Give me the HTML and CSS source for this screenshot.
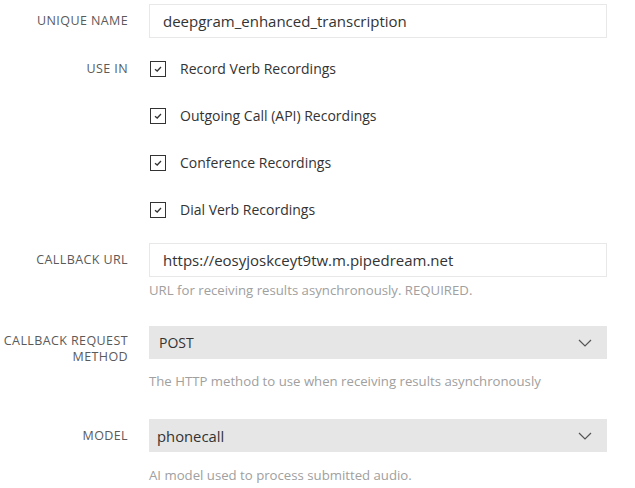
FILE: index.html
```html
<!DOCTYPE html>
<html>
<head>
<meta charset="utf-8">
<link rel="stylesheet" href="styles.css">
</head>
<body>
<form class="form">
  <div class="row row-name">
    <label class="label">UNIQUE NAME</label>
    <div class="field">
      <div class="input">deepgram_enhanced_transcription</div>
    </div>
  </div>
  <div class="row row-use">
    <label class="label label-use">USE IN</label>
    <div class="field checks">
      <div class="check"><span class="box"><svg width="10" height="8" viewBox="0 0 10 8"><path d="M2 4.2 L4.2 6 L8 2" fill="none" stroke="#333" stroke-width="1.3"/></svg></span><span>Record Verb Recordings</span></div>
      <div class="check"><span class="box"><svg width="10" height="8" viewBox="0 0 10 8"><path d="M2 4.2 L4.2 6 L8 2" fill="none" stroke="#333" stroke-width="1.3"/></svg></span><span>Outgoing Call (API) Recordings</span></div>
      <div class="check"><span class="box"><svg width="10" height="8" viewBox="0 0 10 8"><path d="M2 4.2 L4.2 6 L8 2" fill="none" stroke="#333" stroke-width="1.3"/></svg></span><span>Conference Recordings</span></div>
      <div class="check"><span class="box"><svg width="10" height="8" viewBox="0 0 10 8"><path d="M2 4.2 L4.2 6 L8 2" fill="none" stroke="#333" stroke-width="1.3"/></svg></span><span>Dial Verb Recordings</span></div>
    </div>
  </div>
  <div class="row row-url">
    <label class="label">CALLBACK URL</label>
    <div class="field">
      <div class="input">https://eosyjoskceyt9tw.m.pipedream.net</div>
      <div class="help help-url">URL for receiving results asynchronously. REQUIRED.</div>
    </div>
  </div>
  <div class="row row-method">
    <label class="label label-two">CALLBACK REQUEST<br>METHOD</label>
    <div class="field">
      <div class="select"><span>POST</span><svg class="chev" width="14" height="8" viewBox="0 0 14 8"><path d="M1 1 L7 7 L13 1" fill="none" stroke="#555" stroke-width="1.2"/></svg></div>
      <div class="help">The HTTP method to use when receiving results asynchronously</div>
    </div>
  </div>
  <div class="row row-model">
    <label class="label">MODEL</label>
    <div class="field">
      <div class="select"><span class="sel-model">phonecall</span><svg class="chev" width="14" height="8" viewBox="0 0 14 8"><path d="M1 1 L7 7 L13 1" fill="none" stroke="#555" stroke-width="1.2"/></svg></div>
      <div class="help help-model">AI model used to process submitted audio.</div>
    </div>
  </div>
</form>
</body>
</html>
```
FILE: styles.css
```css
html, body {
  margin: 0;
  padding: 0;
  background: #fff;
}
body {
  font-family: "Open Sans", "Noto Sans", sans-serif;
  color: #333;
}
.form {
  display: flex;
  flex-direction: column;
  padding: 4px 28px 0 0;
}
.row {
  display: flex;
  gap: 21px;
}
.label {
  width: 128px;
  flex: none;
  text-align: right;
  font-size: 12.5px;
  letter-spacing: 0.4px;
  color: #5a5a5a;
  padding-top: 8px;
  line-height: 17px;
}
.label-two {
  padding-top: 7px;
  line-height: 16px;
}
.field {
  flex: 1;
  display: flex;
  flex-direction: column;
}
.input {
  height: 32px;
  border: 1px solid #e8e8e8;
  box-sizing: content-box;
  padding: 0 13px;
  font-size: 15px;
  line-height: 32px;
  color: #333;
}
.select {
  height: 33px;
  background: #e6e6e6;
  display: flex;
  align-items: center;
  justify-content: space-between;
  padding: 0 15px 0 10px;
  font-size: 14px;
  color: #333;
}
.sel-model {
  font-size: 14.8px;
  margin-left: -2px;
}
.chev {
  display: block;
}
.help {
  font-size: 13.2px;
  color: #a0a0a0;
  margin-top: 13px;
  line-height: 18px;
}
.help-url {
  margin-top: 4px;
}
.help-model {
  margin-top: 14px;
}
.row-use {
  margin-top: 20px;
}
.label-use {
  padding-top: 2px;
}
.checks {
  display: flex;
  flex-direction: column;
  gap: 26px;
}
.check {
  display: flex;
  align-items: center;
  gap: 14px;
  font-size: 14px;
  height: 21px;
  color: #333;
}
.box {
  width: 14px;
  height: 14px;
  border: 1px solid #333;
  display: flex;
  align-items: center;
  justify-content: center;
  margin-left: 1px;
  flex: none;
}
.row-url {
  margin-top: 23px;
}
.row-method {
  margin-top: 27px;
}
.row-model {
  margin-top: 29px;
}
```
